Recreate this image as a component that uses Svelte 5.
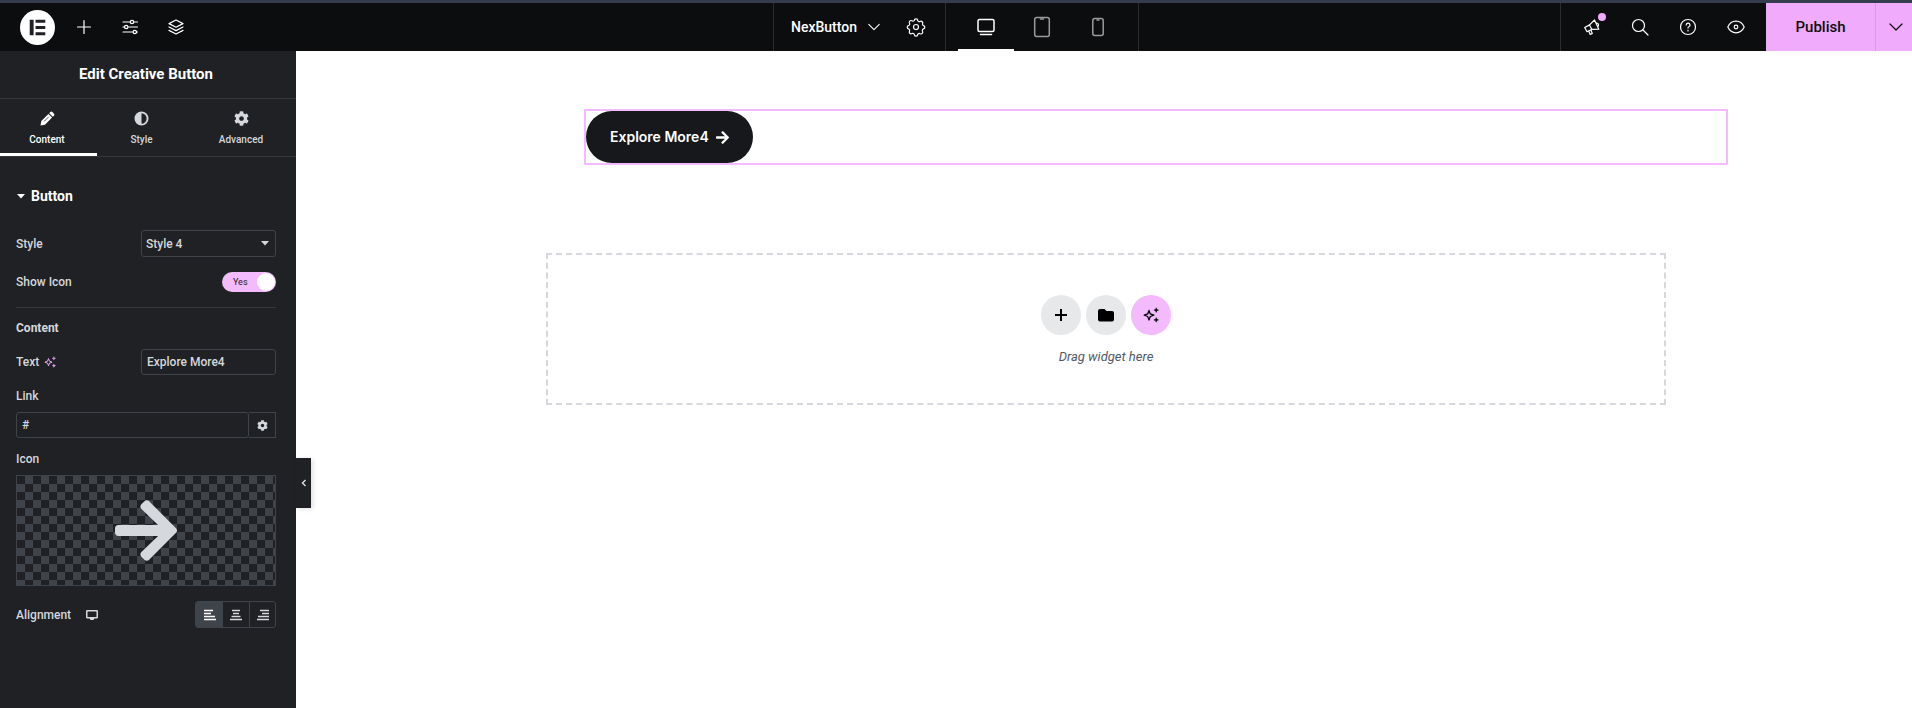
<script lang="ts">
  type Device = 'desktop' | 'tablet' | 'mobile';
  type Align = 'left' | 'center' | 'right';

  const tabs = ['Content', 'Style', 'Advanced'];
  const devices: Device[] = ['desktop', 'tablet', 'mobile'];
  const alignments: Align[] = ['left', 'center', 'right'];
  const styles = ['Style 1', 'Style 2', 'Style 3', 'Style 4', 'Style 5'];

  let activeTab = $state('Content');
  let device = $state<Device>('desktop');
  let align = $state<Align>('left');
  let buttonStyle = $state('Style 4');
  let showIcon = $state(true);
  let text = $state('Explore More4');
  let link = $state('#');
</script>

{#snippet gear()}
  <svg viewBox="0 0 512 512" fill="currentColor" aria-hidden="true">
    <path d="M487.4 315.7l-42.6-24.6c4.3-23.2 4.3-47 0-70.2l42.6-24.6c4.9-2.8 7.1-8.6 5.5-14-11.1-35.6-30-67.8-54.7-94.6-3.8-4.1-10-5.1-14.8-2.3L380.8 110c-17.9-15.4-38.5-27.3-60.8-35.1V25.8c0-5.6-3.9-10.5-9.4-11.7-36.7-8.2-74.3-7.8-109.2 0-5.5 1.2-9.4 6.1-9.4 11.7V75c-22.2 7.9-42.8 19.8-60.8 35.1L88.7 85.5c-4.9-2.8-11-1.9-14.8 2.3-24.7 26.7-43.6 58.9-54.7 94.6-1.7 5.4.6 11.2 5.5 14L67.3 221c-4.3 23.2-4.3 47 0 70.2l-42.6 24.6c-4.9 2.8-7.1 8.6-5.5 14 11.1 35.6 30 67.8 54.7 94.6 3.8 4.1 10 5.1 14.8 2.3l42.6-24.6c17.9 15.4 38.5 27.3 60.8 35.1v49.2c0 5.6 3.9 10.5 9.4 11.7 36.7 8.2 74.3 7.8 109.2 0 5.5-1.2 9.4-6.1 9.4-11.7v-49.2c22.2-7.9 42.8-19.8 60.8-35.1l42.6 24.6c4.9 2.8 11 1.9 14.8-2.3 24.7-26.7 43.6-58.9 54.7-94.6 1.5-5.5-.7-11.3-5.6-14.1zM256 336c-44.1 0-80-35.9-80-80s35.9-80 80-80 80 35.9 80 80-35.9 80-80 80z" />
  </svg>
{/snippet}

{#snippet arrow()}
  <svg viewBox="0 0 448 512" fill="currentColor" aria-hidden="true">
    <path d="M190.5 66.9l22.2-22.2c9.4-9.4 24.6-9.4 33.9 0L441 239c9.4 9.4 9.4 24.6 0 33.9L246.6 467.3c-9.4 9.4-24.6 9.4-33.9 0l-22.2-22.2c-9.5-9.5-9.3-25 .4-34.3L311.4 296H24c-13.3 0-24-10.7-24-24v-32c0-13.3 10.7-24 24-24h287.4L190.9 101.2c-9.8-9.3-10-24.8-.4-34.3z" />
  </svg>
{/snippet}

{#snippet sparkles()}
  <svg viewBox="0 0 16 16" fill="none" aria-hidden="true">
    <path d="M6 3.4 7.300 6.900 10.800 8.200 7.300 9.500 6 13 4.700 9.500 1.200 8.200 4.700 6.900Z" stroke="currentColor" stroke-width="1.300" stroke-linejoin="round" />
    <path d="m13.200.8.6 1.700 1.700.6-1.700.6-.6 1.700-.6-1.700-1.700-.6 1.700-.6ZM13.200 10.600l.6 1.700 1.700.6-1.700.6-.6 1.700-.6-1.700-1.700-.6 1.700-.6Z" fill="currentColor" stroke="currentColor" stroke-width=".5" />
  </svg>
{/snippet}

{#snippet chevron()}
  <svg class="chevron" viewBox="0 0 16 16" aria-hidden="true"><path d="m2 5 6 6 6-6" /></svg>
{/snippet}

<div class="editor">
  <header class="topbar">
    <div class="bar-start">
      <button class="logo" aria-label="Menu">
        <svg viewBox="0 0 36 36" aria-hidden="true">
          <circle cx="18" cy="18" r="18" fill="#fff" />
          <path d="M10 10h4v16h-4zM16 10h10v3H16zM16 16.500h10v3H16zM16 23h10v3H16z" fill="#1f2124" />
        </svg>
      </button>
      <button class="tool" aria-label="Add element">
        <svg viewBox="0 0 20 20"><path d="M10 3.500v13M3.500 10h13" /></svg>
      </button>
      <button class="tool" aria-label="Site settings">
        <svg viewBox="0 0 20 20">
          <path d="M3 5h7.500M14 5h3.500M3 10h1.500M8 10h9.500M3 15h10M16.500 15h1" />
          <circle cx="12" cy="5" r="1.700" />
          <circle cx="6.200" cy="10" r="1.700" />
          <circle cx="14.800" cy="15" r="1.700" />
        </svg>
      </button>
      <button class="tool" aria-label="Structure">
        <svg viewBox="0 0 20 20">
          <path d="m10 3 7 3.600-7 3.600-7-3.600ZM3 10l7 3.600 7-3.600M3 13.400l7 3.600 7-3.600" />
        </svg>
      </button>
    </div>

    <div class="bar-center">
      <div class="document">
        <button class="doc-name">NexButton {@render chevron()}</button>
        <button class="tool" aria-label="Page settings">
          <svg viewBox="0 0 20 20">
            <path d="M8.300 3.500a1.700 1.700 0 0 1 3.400 0 1.700 1.700 0 0 0 2.400 1 1.750 1.750 0 0 1 2.400 2.400 1.700 1.700 0 0 0 1 1.700 1.700 1.700 0 0 1 0 3.300 1.700 1.700 0 0 0-1 2.400 1.750 1.750 0 0 1-2.400 2.400 1.700 1.700 0 0 0-2.400.8 1.700 1.700 0 0 1-3.400 0 1.700 1.700 0 0 0-2.400-1 1.750 1.750 0 0 1-2.400-2.400 1.700 1.700 0 0 0-1-2.200 1.700 1.700 0 0 1 0-3.300 1.700 1.700 0 0 0 1-2.400 1.750 1.750 0 0 1 2.400-2.400 1.700 1.700 0 0 0 2.400-.3Z" />
            <circle cx="10" cy="10" r="2.500" />
          </svg>
        </button>
      </div>
      <div class="devices">
        {#each devices as item (item)}
          <button class="device" class:selected={device === item} aria-label={item} onclick={() => (device = item)}>
            {#if item === 'desktop'}
              <svg viewBox="0 0 24 24">
                <rect x="4" y="4.500" width="16" height="12" rx="1.500" />
                <path d="M6.500 19.500h11" />
              </svg>
            {:else if item === 'tablet'}
              <svg viewBox="0 0 24 24">
                <rect x="4.700" y="2.500" width="14.600" height="19" rx="2" />
                <path d="M10.500 4h3" />
              </svg>
            {:else}
              <svg viewBox="0 0 24 24">
                <rect x="6.800" y="3.500" width="10.400" height="17" rx="2" />
                <path d="M11 5h2" />
              </svg>
            {/if}
          </button>
        {/each}
      </div>
    </div>

    <div class="bar-end">
      <div class="utilities">
        <button class="tool" aria-label="What's new">
          <svg viewBox="0 0 20 20">
            <path d="m12.500 3 4.300 9.200-7 .2-4.800 2.300-2.300-4.200 4.900-2.600ZM7.600 7.900l2.200 4.500M6.700 14l1.500 3.400 2.100-.9-1.400-3.500M14.800 6a2 2 0 0 1 1.500 3" />
          </svg>
          <span class="badge"></span>
        </button>
        <button class="tool" aria-label="Finder">
          <svg viewBox="0 0 20 20"><circle cx="8.500" cy="8.500" r="6" /><path d="m13 13 5 5" /></svg>
        </button>
        <button class="tool" aria-label="Help">
          <svg viewBox="0 0 20 20">
            <circle cx="10" cy="10" r="7.500" />
            <path d="M8.200 8a1.900 1.900 0 1 1 2.600 1.800c-.6.200-.8.500-.8 1.200M10 13.200v.800" />
          </svg>
        </button>
        <button class="tool" aria-label="Preview changes">
          <svg viewBox="0 0 20 20">
            <path d="M1.800 10C3.500 6.300 6.500 4.200 10 4.200S16.500 6.300 18.200 10C16.500 13.700 13.500 15.800 10 15.800S3.500 13.700 1.800 10Z" />
            <circle cx="10" cy="10" r="1.800" />
          </svg>
        </button>
      </div>
      <button class="publish">Publish</button>
      <button class="publish-more" aria-label="Save options">{@render chevron()}</button>
    </div>
  </header>

  <div class="workspace">
    <aside class="panel">
      <h1>Edit Creative Button</h1>
      <nav class="tabs">
        {#each tabs as tab (tab)}
          <button class="tab" class:active={activeTab === tab} onclick={() => (activeTab = tab)}>
            {#if tab === 'Content'}
              <svg viewBox="0 0 16 16" fill="currentColor" aria-hidden="true">
                <path d="M11 1.100q1.100-1.100 2.200 0l1.700 1.700q1.100 1.100 0 2.200l-1.200 1.200-3.900-3.900ZM9 3.100 12.900 7 5.300 14.600.5 15.500 1.400 10.700Z" />
                <path d="m9.300 6.200-5 5" stroke="#1f2124" stroke-width=".8" />
              </svg>
            {:else if tab === 'Style'}
              <svg viewBox="0 0 16 16" fill="currentColor" aria-hidden="true">
                <path fill-rule="evenodd" d="M8 .500a7.500 7.500 0 1 1 0 15 7.500 7.500 0 0 1 0-15Zm0 2v11a5.500 5.500 0 0 0 0-11Z" />
              </svg>
            {:else}
              {@render gear()}
            {/if}
            {tab}
          </button>
        {/each}
      </nav>

      <div class="controls">
        <button class="section-title">
          <svg viewBox="0 0 8 5" aria-hidden="true"><path d="M0 0h8L4 4.500Z" fill="currentColor" /></svg>
          Button
        </button>

        <div class="row">
          <label for="style">Style</label>
          <div class="select">
            <select id="style" bind:value={buttonStyle}>
              {#each styles as name (name)}
                <option>{name}</option>
              {/each}
            </select>
            <svg viewBox="0 0 8 5" aria-hidden="true"><path d="M0 0h8L4 4.500Z" fill="currentColor" /></svg>
          </div>
        </div>

        <div class="row">
          <label for="show-icon">Show Icon</label>
          <label class="switch" class:off={!showIcon}>
            <input id="show-icon" type="checkbox" bind:checked={showIcon} />
            <span>{showIcon ? 'Yes' : 'No'}</span>
            <i></i>
          </label>
        </div>

        <h2>Content</h2>

        <div class="row">
          <div class="label-group">
            <label for="text">Text</label>
            <button class="ai" aria-label="Edit with AI">{@render sparkles()}</button>
          </div>
          <input id="text" class="field" type="text" bind:value={text} />
        </div>

        <div class="stack">
          <label for="link">Link</label>
          <div class="link">
            <input id="link" class="field" type="text" bind:value={link} />
            <button class="link-options" aria-label="Link options">{@render gear()}</button>
          </div>
        </div>

        <div class="stack">
          <label for="icon">Icon</label>
          <button id="icon" class="icon-preview">{@render arrow()}</button>
        </div>

        <div class="row">
          <div class="label-group wide">
            <span>Alignment</span>
            <button class="responsive" aria-label="Desktop">
              <svg viewBox="0 0 12 12" fill="none" aria-hidden="true">
                <rect x=".75" y="1.750" width="10.500" height="7" rx=".5" stroke="currentColor" stroke-width="1.500" />
                <path d="M3.500 9h5l-1 2h-3Z" fill="currentColor" />
              </svg>
            </button>
          </div>
          <div class="choices" role="radiogroup" aria-label="Alignment">
            {#each alignments as item (item)}
              <label class="choice" class:checked={align === item}>
                <input type="radio" name="align" value={item} aria-label={item} bind:group={align} />
                <svg viewBox="0 0 12 12" stroke="currentColor" stroke-width="1.300" aria-hidden="true">
                  {#if item === 'left'}
                    <path d="M0 1.500h9M0 4.500h7M0 7.500h11M0 10.500h12" />
                  {:else if item === 'center'}
                    <path d="M2 1.500h8M3 4.500h6M1.500 7.500h9M0 10.500h12" />
                  {:else}
                    <path d="M3 1.500h9M5 4.500h7M1 7.500h11M0 10.500h12" />
                  {/if}
                </svg>
              </label>
            {/each}
          </div>
        </div>
      </div>

      <button class="collapse" aria-label="Collapse panel">
        <svg viewBox="0 0 6 8" aria-hidden="true"><path d="M4.500 1 1.500 4l3 3" /></svg>
      </button>
    </aside>

    <main class="canvas">
      <div class="page">
        <div class="widget">
          <a class="cta" href={link}>
            {text}
            {#if showIcon}{@render arrow()}{/if}
          </a>
        </div>
        <section class="dropzone">
          <div class="actions">
            <button class="circle" aria-label="Add new container">
              <svg viewBox="0 0 16 16"><path d="M8 2v12M2 8h12" stroke="currentColor" stroke-width="2" /></svg>
            </button>
            <button class="circle" aria-label="Add template">
              <svg viewBox="0 0 16 16"><path d="M2 2h4.500l2 2H14q2 0 2 2v6.500q0 2-2 2H2q-2 0-2-2V4q0-2 2-2Z" fill="currentColor" /></svg>
            </button>
            <button class="circle ai-circle" aria-label="Build with AI">{@render sparkles()}</button>
          </div>
          <p>Drag widget here</p>
        </section>
      </div>
    </main>
  </div>
</div>

<style>
  :global(body) {
    background: #fff;
  }

  .editor,
  .editor * {
    box-sizing: border-box;
  }

  .editor {
    display: flex;
    flex-direction: column;
    min-height: 100vh;
    font: 500 12px/16px Roboto, 'Liberation Sans', sans-serif;
    color: #d5d8dc;
  }

  button,
  input,
  select {
    margin: 0;
    padding: 0;
    border: 0;
    background: none;
    color: inherit;
    font: inherit;
  }

  button {
    display: flex;
    align-items: center;
    justify-content: center;
    cursor: pointer;
  }

  svg {
    display: block;
    flex: none;
  }

  /* top bar */
  .topbar {
    display: grid;
    grid-template-columns: 1fr auto 1fr;
    height: 51px;
    border-top: 3px solid #343d4d;
    background: #0c0d0e;
    color: #fff;
  }

  .bar-start,
  .bar-end {
    display: flex;
    align-items: center;
  }

  .bar-start {
    padding-left: 20px;
    gap: 10px;
  }

  .bar-end {
    align-items: stretch;
    justify-content: flex-end;
  }

  .logo {
    margin-right: 1px;
  }

  .logo svg {
    width: 35px;
    height: 35px;
  }

  .tool {
    position: relative;
    width: 36px;
    height: 36px;
  }

  .tool svg {
    width: 20px;
    height: 20px;
  }

  .tool svg,
  .device svg,
  .chevron {
    fill: none;
    stroke: currentColor;
    stroke-width: 1.2;
    stroke-linecap: round;
    stroke-linejoin: round;
  }

  .bar-center,
  .document,
  .devices {
    display: flex;
    align-items: center;
  }

  .document,
  .devices {
    height: 48px;
    border-left: 1px solid #2a2c2e;
  }

  .document {
    gap: 17px;
    padding: 0 11px 0 17px;
  }

  .doc-name {
    gap: 10px;
    font-size: 14px;
  }

  .chevron {
    width: 16px;
    height: 16px;
  }

  .doc-name .chevron {
    width: 14px;
    height: 14px;
  }

  .devices {
    padding: 0 12px;
    border-right: 1px solid #2a2c2e;
  }

  .device {
    width: 56px;
    height: 48px;
    border-top: 2px solid transparent;
    border-bottom: 2px solid transparent;
    color: #9a9b9c;
  }

  .device.selected {
    border-bottom-color: #fff;
    color: #fff;
  }

  .device svg {
    width: 24px;
    height: 24px;
    stroke-width: 1.5;
  }

  .utilities {
    display: flex;
    align-items: center;
    gap: 12px;
    padding: 0 12px 0 13px;
    border-left: 1px solid #2a2c2e;
  }

  .badge {
    position: absolute;
    top: 4px;
    right: 4px;
    width: 8px;
    height: 8px;
    border-radius: 50%;
    background: #f0abfc;
  }

  .publish,
  .publish-more {
    background: #f0abfc;
    color: #0c0d0e;
    font-size: 15px;
  }

  .publish {
    width: 109px;
  }

  .publish-more {
    width: 37px;
    padding-left: 4px;
    border-left: 1px solid #eb8efb;
  }

  /* panel */
  .workspace {
    display: flex;
    flex: 1;
  }

  .panel {
    position: relative;
    flex: none;
    width: 296px;
    background: #1f2124;
  }

  h1,
  h2,
  p {
    margin: 0;
  }

  h1 {
    padding: 13px 4px 14px 0;
    border-bottom: 1px solid #35373b;
    color: #fff;
    font-size: 15px;
    font-weight: 700;
    line-height: 20px;
    text-align: center;
  }

  .tabs {
    display: grid;
    grid-template-columns: 97fr 92fr 107fr;
    height: 58px;
    border-bottom: 1px solid #35373b;
  }

  .tab {
    flex-direction: column;
    gap: 6px;
    padding: 7px 3px 0 0;
    border-bottom: 3px solid transparent;
    font-size: 10px;
  }

  .tab svg {
    width: 15px;
    height: 15px;
  }

  .tab.active {
    border-bottom-color: #fff;
    color: #fff;
  }

  .controls {
    display: flex;
    flex-direction: column;
    padding: 30px 20px 40px 16px;
  }

  .section-title {
    justify-content: flex-start;
    gap: 6px;
    margin-bottom: 25px;
    padding-left: 1px;
    color: #fff;
    font-size: 14px;
    font-weight: 700;
    line-height: 18px;
  }

  .section-title svg,
  .select svg {
    width: 8px;
    height: 5px;
  }

  .row {
    display: flex;
    align-items: center;
    justify-content: space-between;
    min-height: 26px;
  }

  .row + .row {
    margin-top: 12px;
  }

  .field,
  select {
    width: 135px;
    height: 26px;
    padding: 0 5px;
    border: 1px solid #3f444b;
    border-radius: 3px;
  }

  .select {
    position: relative;
  }

  select {
    display: block;
    height: 27px;
    padding: 0 4px;
    appearance: none;
  }

  option {
    background: #1f2124;
  }

  .select svg {
    position: absolute;
    top: 11px;
    right: 7px;
    pointer-events: none;
  }

  .switch {
    position: relative;
    display: flex;
    align-items: center;
    justify-content: space-between;
    width: 54px;
    height: 20px;
    padding: 0 1px 0 11px;
    border-radius: 10px;
    background: #f3bafd;
    color: #1f2124;
    font-size: 9px;
    font-weight: 400;
  }

  .switch.off {
    background: #515962;
    color: #fff;
  }

  .switch input,
  .choice input {
    position: absolute;
    opacity: 0;
  }

  .switch i {
    width: 18px;
    height: 18px;
    border-radius: 50%;
    background: #fff;
  }

  h2 {
    margin: 12px 0 13px;
    padding-top: 12px;
    border-top: 1px solid #35373b;
    font-size: 12px;
    font-weight: 700;
    line-height: 16px;
  }

  .label-group {
    display: flex;
    align-items: center;
    gap: 5px;
  }

  .label-group.wide {
    gap: 15px;
  }

  .ai {
    color: #f0abfc;
  }

  .ai svg,
  .responsive svg {
    width: 12px;
    height: 12px;
  }

  .stack {
    display: flex;
    flex-direction: column;
    gap: 8px;
    margin-top: 13px;
  }

  .link {
    display: flex;
  }

  .link .field {
    flex: 1;
    width: auto;
  }

  .link-options {
    width: 27px;
    border: 1px solid #3f444b;
    border-left: 0;
  }

  .link-options svg {
    width: 11px;
    height: 11px;
  }

  .icon-preview {
    height: 111px;
    border: 1px solid #3f444b;
    background: repeating-conic-gradient(#3f444b 0 25%, #1f2124 0 50%) 0 0 / 16px 16px;
  }

  .icon-preview svg {
    width: 62px;
    height: 71px;
  }

  .stack + .row {
    margin-top: 15px;
  }

  .choices {
    display: flex;
    overflow: hidden;
    border: 1px solid #3f444b;
    border-radius: 3px;
  }

  .choice {
    position: relative;
    display: flex;
    align-items: center;
    justify-content: center;
    width: 26px;
    height: 25px;
  }

  .choice:first-child {
    width: 27px;
  }

  .choice:last-child {
    border-left: 1px solid #3f444b;
  }

  .choice.checked {
    background: #3f444b;
    color: #fff;
  }

  .choice svg {
    width: 12px;
    height: 12px;
  }

  .collapse {
    position: absolute;
    top: 407px;
    left: 100%;
    width: 15px;
    height: 50px;
    background: #1f2124;
    box-shadow: 2px 1px 5px rgb(0 0 0 / 0.12);
  }

  .collapse svg {
    width: 6px;
    height: 8px;
    fill: none;
    stroke: currentColor;
    stroke-width: 1.5;
  }

  /* canvas */
  .canvas {
    flex: 1;
    padding: 58px 8px 40px 12px;
    background: #fff;
  }

  .page {
    display: flex;
    flex-direction: column;
    gap: 88px;
    max-width: 1120px;
    margin: 0 auto;
  }

  .widget {
    display: flex;
    margin: 0 -62px 0 38px;
    border: 2px solid #f3bafd;
  }

  .cta {
    display: flex;
    align-items: center;
    gap: 7px;
    height: 52px;
    padding: 0 24px;
    border-radius: 26px;
    background: #16181b;
    color: #fff;
    font: 600 14px/20px Inter, 'Liberation Sans', sans-serif;
    text-decoration: none;
  }

  .cta svg {
    width: 13px;
    height: 15px;
  }

  .dropzone {
    display: flex;
    flex-direction: column;
    align-items: center;
    gap: 14px;
    padding: 40px 20px 39px;
    border: 2px dashed #d5d8dc;
    color: #515962;
  }

  .actions {
    display: flex;
    gap: 5px;
  }

  .circle {
    width: 40px;
    height: 40px;
    border-radius: 50%;
    background: #e6e8ea;
    color: #000;
  }

  .circle svg {
    width: 16px;
    height: 16px;
  }

  .ai-circle {
    background: #f3bafd;
  }

  .dropzone p {
    font-size: 13px;
    font-style: italic;
    font-weight: 400;
    line-height: 15px;
  }
</style>
